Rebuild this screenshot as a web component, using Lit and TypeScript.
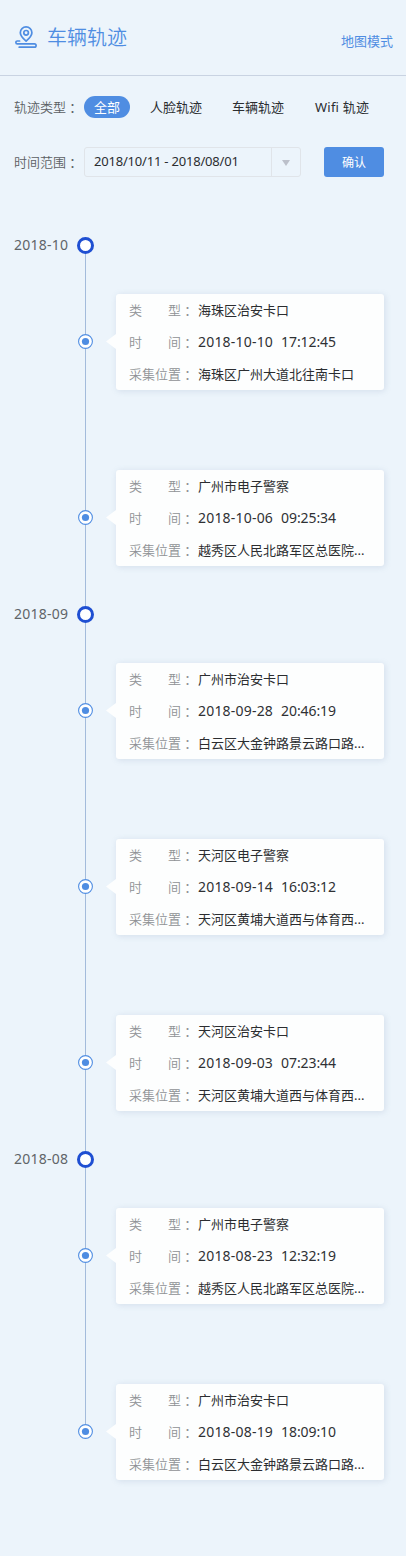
import { LitElement, html, css } from "lit";
import { customElement, property, state } from "lit/decorators.js";

interface TrackRecord { kind: string; date: string; time: string; place: string; }
interface MonthGroup { month: string; records: TrackRecord[]; }

const GROUPS: MonthGroup[] = [
  { month: "2018-10", records: [
    { kind: "海珠区治安卡口", date: "2018-10-10", time: "17:12:45", place: "海珠区广州大道北往南卡口" },
    { kind: "广州市电子警察", date: "2018-10-06", time: "09:25:34", place: "越秀区人民北路军区总医院..." },
  ] },
  { month: "2018-09", records: [
    { kind: "广州市治安卡口", date: "2018-09-28", time: "20:46:19", place: "白云区大金钟路景云路口路..." },
    { kind: "天河区电子警察", date: "2018-09-14", time: "16:03:12", place: "天河区黄埔大道西与体育西..." },
    { kind: "天河区治安卡口", date: "2018-09-03", time: "07:23:44", place: "天河区黄埔大道西与体育西..." },
  ] },
  { month: "2018-08", records: [
    { kind: "广州市电子警察", date: "2018-08-23", time: "12:32:19", place: "越秀区人民北路军区总医院..." },
    { kind: "广州市治安卡口", date: "2018-08-19", time: "18:09:10", place: "白云区大金钟路景云路口路..." },
  ] },
];

const TYPES = ["全部", "人脸轨迹", "车辆轨迹", "Wifi 轨迹"];

@customElement("track-card")
class TrackCard extends LitElement {
  @property({ attribute: false }) record!: TrackRecord;

  static styles = css`
    :host { display: block; }
    .card {
      position: relative;
      box-sizing: border-box;
      height: 96px;
      padding-left: 13px;
      background: #fdfefe;
      border-radius: 3px;
      box-shadow: 1px 1px 6px rgba(110, 135, 170, 0.2);
    }
    .card::before {
      content: "";
      position: absolute;
      left: -10px;
      top: 40px;
      width: 10px;
      height: 15px;
      background: #fdfefe;
      clip-path: polygon(100% 0, 0 50%, 100% 100%);
    }
    .row { display: flex; height: 32px; line-height: 32px; white-space: nowrap; }
    .label { display: flex; justify-content: space-between; width: 52px; font-weight: 350; color: #8f9295; }
    .colon { width: 17px; line-height: 33px; font-family: "Noto Sans CJK TC", sans-serif; color: #8f9295; }
    .value { color: #2b2d30; }
    .stamp { display: flex; gap: 8px; font-size: 14px; letter-spacing: 0.2px; color: #2f3134; }
    .clock { letter-spacing: -0.1px; }
  `;

  private label(text: string) {
    return html`<span class="label">${[...text].map((c) => html`<span>${c}</span>`)}</span><span class="colon">：</span>`;
  }

  render() {
    const r = this.record;
    return html`<div class="card">
      <div class="row">${this.label("类型")}<span class="value">${r.kind}</span></div>
      <div class="row">${this.label("时间")}<span class="value stamp"><span>${r.date}</span><span class="clock">${r.time}</span></span></div>
      <div class="row">${this.label("采集位置")}<span class="value">${r.place}</span></div>
    </div>`;
  }
}

@customElement("app-root")
class AppRoot extends LitElement {
  @state() private active = TYPES[0];

  static styles = css`
    :host {
      display: block;
      min-height: 1556px;
      background: #ecf4fb;
      font-family: "Noto Sans", "Noto Sans CJK SC", sans-serif;
      font-size: 13px;
      color: #2b2d30;
    }
    .header {
      box-sizing: border-box;
      display: flex;
      height: 76px;
      padding: 0 13px 0 14px;
      border-bottom: 1px solid #c9d3e2;
      color: #4f8de2;
    }
    .logo { width: 24px; height: 24px; margin-top: 25px; }
    .title { margin: 23px 0 0 9px; font-size: 20px; line-height: 30px; font-weight: 350; }
    .mode { margin: 31px 0 0 auto; line-height: 20px; }
    .filters { display: flex; align-items: center; height: 22px; padding: 20px 14px 0; }
    .range { height: 30px; padding-top: 29px; }
    .name { width: 52px; height: 22px; line-height: 22px; font-weight: 350; color: #5b5f63; }
    .colon { width: 18px; height: 22px; line-height: 23px; font-family: "Noto Sans CJK TC", sans-serif; color: #606468; }
    .types { display: flex; }
    .type { line-height: 22px; padding: 0 10px; margin-right: 10px; cursor: pointer; white-space: nowrap; }
    .type:last-child { margin-left: 1px; letter-spacing: 0.2px; }
    .active { background: #4f8de2; color: #fff; border-radius: 11px; }
    .select {
      box-sizing: border-box;
      display: flex;
      width: 217px;
      height: 30px;
      border: 1px solid #e0e4e9;
      border-radius: 3px;
    }
    .dates { flex: 1; padding-left: 9px; line-height: 27px; letter-spacing: -0.2px; white-space: nowrap; }
    .drop { display: flex; align-items: center; justify-content: center; width: 28px; border-left: 1px solid #e0e4e9; }
    .arrow { width: 8px; height: 6px; margin-top: 2px; background: #bcc0ca; clip-path: polygon(0 0, 100% 0, 50% 100%); }
    .confirm {
      width: 60px;
      height: 30px;
      margin-left: 23px;
      padding: 0;
      border: 0;
      border-radius: 3px;
      background: #4f8de2;
      color: #fff;
      font: inherit;
      font-size: 12px;
    }
    .timeline { padding-top: 60px; }
    .month { display: flex; align-items: center; height: 17px; padding-left: 14px; }
    .month-name { width: 63px; font-size: 14px; letter-spacing: 0.25px; color: #606468; line-height: 15px; height: 17px; }
    .ring { box-sizing: border-box; width: 17px; height: 17px; border: 3px solid #1f4fd2; border-radius: 50%; background: #fff; }
    .record { display: grid; grid-template-columns: 15px 268px; column-gap: 23px; height: 176px; padding-left: 78px; }
    .axis { display: flex; flex-direction: column; align-items: center; }
    .line { width: 1px; flex: 0 0 80px; background: #a3bbdb; }
    .rest { flex: 1; }
    .dot { display: block; width: 15px; height: 15px; }
    .group:last-child .record:last-child .rest { background: none; }
    .body { padding-top: 40px; }
  `;

  render() {
    return html`
      <header class="header">
        <svg class="logo" viewBox="0 0 24 24" fill="none" stroke="currentColor" stroke-width="1.7" stroke-linecap="round" stroke-linejoin="round">
          <path d="M12.100 16.200C9.200 13.600 6.300 11 6.300 7.700a5.800 5.800 0 0 1 11.600 0c0 3.300-2.900 5.900-5.800 8.500Z" />
          <circle cx="12.100" cy="7.800" r="2.300" />
          <path d="M5.600 16H3.300a1.300 1.300 0 0 0 0 2.800H20.400a1.700 1.700 0 0 1 0 3.400H5.200" />
        </svg>
        <span class="title">车辆轨迹</span>
        <span class="mode">地图模式</span>
      </header>
      <section class="filters">
        <span class="name">轨迹类型</span><span class="colon">：</span>
        <div class="types">
          ${TYPES.map((t) => html`<span class="type ${t === this.active ? "active" : ""}" @click=${() => (this.active = t)}>${t}</span>`)}
        </div>
      </section>
      <section class="filters range">
        <span class="name">时间范围</span><span class="colon">：</span>
        <div class="select"><span class="dates">2018/10/11 - 2018/08/01</span><span class="drop"><span class="arrow"></span></span></div>
        <button class="confirm">确认</button>
      </section>
      <main class="timeline">
        ${GROUPS.map((g) => html`<section class="group">
          <div class="month"><span class="month-name">${g.month}</span><span class="ring"></span></div>
          ${g.records.map((r) => html`<div class="record">
            <div class="axis">
              <span class="line"></span>
              <svg class="dot" viewBox="0 0 15 15"><circle cx="7.5" cy="7.5" r="6.900" fill="#fff" stroke="#4f8de2" stroke-width="1.100" /><circle cx="7.5" cy="7.5" r="3.600" fill="#4f8de2" /></svg>
              <span class="line rest"></span>
            </div>
            <div class="body"><track-card .record=${r}></track-card></div>
          </div>`)}
        </section>`)}
      </main>
    `;
  }
}
